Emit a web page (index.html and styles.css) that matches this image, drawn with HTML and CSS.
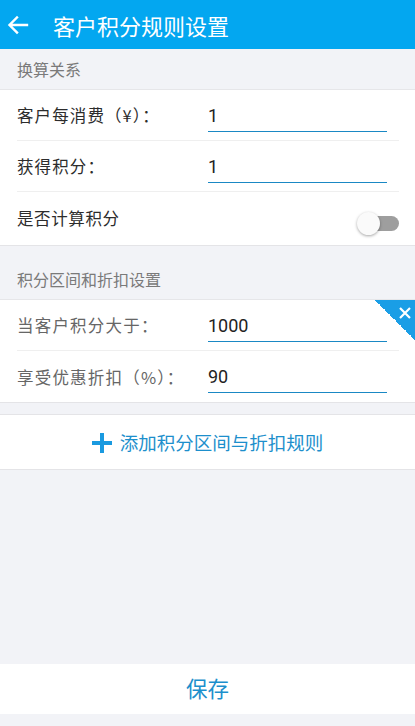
FILE: index.html
```html
<!DOCTYPE html>
<html lang="zh">
<head>
<meta charset="utf-8">
<link rel="stylesheet" href="styles.css">
</head>
<body>
<div class="app">
  <header class="topbar">
    <svg class="back" width="22" height="20" viewBox="0 0 22 20"><path d="M20 10H3M10 2.5L2.5 10L10 17.5" fill="none" stroke="#fff" stroke-width="2.4" stroke-linecap="square"/></svg>
    <h1 class="title">客户积分规则设置</h1>
  </header>

  <div class="section-head">换算关系</div>
  <div class="group">
    <div class="row">
      <span class="label">客户每消费（¥）：</span>
      <span class="field">1</span>
    </div>
    <div class="row">
      <span class="label">获得积分：</span>
      <span class="field">1</span>
    </div>
    <div class="row row-switch">
      <span class="label small">是否计算积分</span>
      <span class="switch"><span class="track"></span><span class="knob"></span></span>
    </div>
  </div>

  <div class="section-head tall">积分区间和折扣设置</div>
  <div class="group rule">
    <span class="corner"><svg width="14" height="14" viewBox="0 0 14 14"><path d="M2 2L12 12M12 2L2 12" stroke="#fff" stroke-width="2.2"/></svg></span>
    <div class="row">
      <span class="label muted">当客户积分大于：</span>
      <span class="field">1000</span>
    </div>
    <div class="row">
      <span class="label muted">享受优惠折扣（%）：</span>
      <span class="field">90</span>
    </div>
  </div>

  <div class="add">
    <svg width="20" height="20" viewBox="0 0 20 20"><path d="M10 0V20M0 10H20" stroke="#1a9ae0" stroke-width="4"/></svg>
    <span>添加积分区间与折扣规则</span>
  </div>

  <div class="spacer"></div>

  <div class="save">保存</div>
</div>
</body>
</html>
```

FILE: styles.css
```css
* { box-sizing: border-box; margin: 0; padding: 0; }
html, body { height: 100%; }
body {
  background: #f2f3f7;
  font-family: "Noto Sans CJK SC", "Noto Sans", Roboto, sans-serif;
  color: #333;
}
.app {
  height: 726px;
  display: flex;
  flex-direction: column;
}
.topbar {
  height: 49px;
  background: #03a7f0;
  display: flex;
  align-items: center;
  padding-left: 7px;
  flex-shrink: 0;
}
.back { margin-right: 24px; }
.title {
  font-size: 22px;
  font-weight: 400;
  color: #fff;
  line-height: 1;
}
.section-head {
  height: 41px;
  padding: 0 17px;
  display: flex;
  align-items: center;
  font-size: 16px;
  color: #7a7a7a;
  border-bottom: 1px solid #e6e6e9;
}
.section-head.tall {
  height: 54px;
  padding-top: 12px;
}
.group {
  background: #fff;
  border-bottom: 1px solid #e4e4e7;
  position: relative;
}
.row {
  height: 51px;
  margin: 0 16px 0 17px;
  display: flex;
  align-items: center;
  border-bottom: 1px solid #efefef;
}
.row:last-child { border-bottom: none; }
.label {
  width: 191px;
  font-size: 16.5px;
  color: #2c2c2c;
  letter-spacing: 1.1px;
}
.label.small { font-size: 16.5px; letter-spacing: 0.6px; flex: 1; }
.label.muted { font-size: 16.5px; color: #666; letter-spacing: 1.2px; }
.field {
  width: 179px;
  height: 29px;
  margin-top: 4px;
  border-bottom: 1.5px solid #1a88c4;
  font-family: Roboto, "Noto Sans", sans-serif;
  font-size: 18px;
  color: #222;
  line-height: 26px;
  letter-spacing: 0;
}
.row-switch {
  height: 53px;
  padding-bottom: 2px;
}
.switch {
  position: relative;
  width: 42px;
  height: 24px;
  margin-top: 10px;
}
.track {
  position: absolute;
  left: 10px;
  top: 5px;
  width: 32px;
  height: 15px;
  border-radius: 8px;
  background: #9e9e9e;
}
.knob {
  position: absolute;
  left: 0;
  top: 1px;
  width: 23px;
  height: 23px;
  border-radius: 50%;
  background: #fafafa;
  box-shadow: 0 1px 3px rgba(0,0,0,0.35);
}
.corner {
  position: absolute;
  right: 0;
  top: 0;
  width: 40px;
  height: 40px;
  background: linear-gradient(to bottom left, #1a9ee6 50%, transparent 50%);
}
.corner svg {
  position: absolute;
  right: 3px;
  top: 6px;
}
.add {
  margin-top: 11px;
  height: 56px;
  background: #fff;
  border-top: 1px solid #e4e4e7;
  border-bottom: 1px solid #e4e4e7;
  display: flex;
  align-items: center;
  justify-content: center;
  gap: 8px;
  font-size: 18.5px;
  color: #1d8fcc;
}
.add svg { margin-top: 1px; }
.spacer { flex: 1; }
.save {
  height: 50px;
  margin-bottom: 12px;
  padding-bottom: 3px;
  background: #fff;
  display: flex;
  align-items: center;
  justify-content: center;
  font-size: 21.5px;
  color: #1d8fcc;
}
```
